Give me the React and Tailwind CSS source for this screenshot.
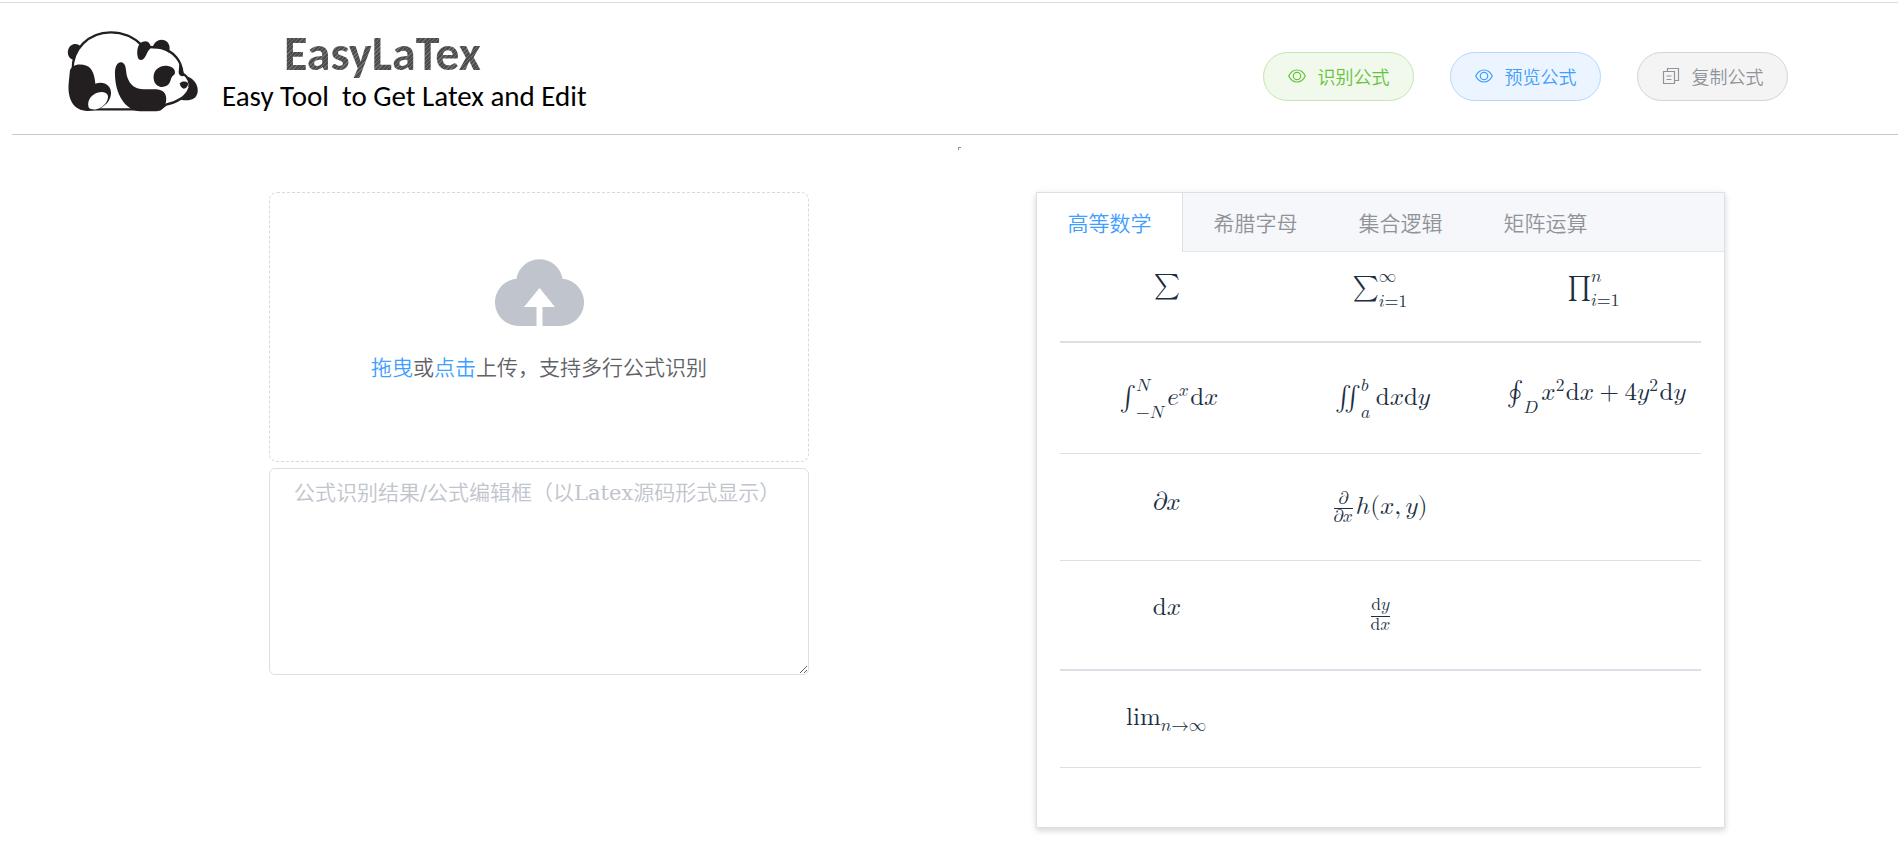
const TABS = ['高等数学', '希腊字母', '集合逻辑', '矩阵运算'];

const D = () => <mi mathvariant="normal">d</mi>;
const SumLimits = () => (
  <mrow>
    <mi>i</mi>
    <mo lspace="0" rspace="0">=</mo>
    <mn>1</mn>
  </mrow>
);

const ROWS = [
  {
    cell: 'h-[91px] border-b-2 pt-[22px]',
    items: [
      <mo>∑</mo>,
      <msubsup>
        <mo>∑</mo>
        <SumLimits />
        <mi>∞</mi>
      </msubsup>,
      <msubsup>
        <mo>∏</mo>
        <SumLimits />
        <mi>n</mi>
      </msubsup>,
    ],
  },
  {
    cell: 'h-[111px] border-b pt-9',
    items: [
      <>
        <msubsup>
          <mo rspace="2px">∫</mo>
          <mrow>
            <mo>−</mo>
            <mi>N</mi>
          </mrow>
          <mi>N</mi>
        </msubsup>
        <msup>
          <mi>e</mi>
          <mi>x</mi>
        </msup>
        <D />
        <mi>x</mi>
      </>,
      <>
        <msubsup>
          <mo>∬</mo>
          <mi>a</mi>
          <mi>b</mi>
        </msubsup>
        <D />
        <mi>x</mi>
        <D />
        <mi>y</mi>
      </>,
      <>
        <msub>
          <mo rspace="2px">∮</mo>
          <mi>D</mi>
        </msub>
        <msup>
          <mi>x</mi>
          <mn>2</mn>
        </msup>
        <D />
        <mi>x</mi>
        <mo>+</mo>
        <mn>4</mn>
        <msup>
          <mi>y</mi>
          <mn>2</mn>
        </msup>
        <D />
        <mi>y</mi>
      </>,
    ],
  },
  {
    cell: 'h-[107px] border-b pt-[37px]',
    items: [
      <>
        <mi>∂</mi>
        <mi>x</mi>
      </>,
      <>
        <mfrac>
          <mi>∂</mi>
          <mrow>
            <mi>∂</mi>
            <mi>x</mi>
          </mrow>
        </mfrac>
        <mspace width="3px" />
        <mi>h</mi>
        <mo stretchy="false">(</mo>
        <mi>x</mi>
        <mo>,</mo>
        <mi>y</mi>
        <mo stretchy="false">)</mo>
      </>,
      null,
    ],
  },
  {
    cell: 'h-[110px] border-b-2 pt-[37px]',
    items: [
      <>
        <D />
        <mi>x</mi>
      </>,
      <mfrac>
        <mrow>
          <D />
          <mi>y</mi>
        </mrow>
        <mrow>
          <D />
          <mi>x</mi>
        </mrow>
      </mfrac>,
      null,
    ],
  },
  {
    cell: 'h-[97px] border-b pt-[37px]',
    items: [
      <msub>
        <mi>lim</mi>
        <mrow>
          <mi>n</mi>
          <mo lspace="0" rspace="0">→</mo>
          <mi>∞</mi>
        </mrow>
      </msub>,
      null,
      null,
    ],
  },
];

function Panda() {
  return (
    <svg viewBox="0 0 435 300" className="h-[100px] w-[145px] shrink-0" aria-label="EasyLaTex" role="img">
      <g fill="#231f20">
        <path d="M40 120C18 114 20 84 34 76C44 68 56 72 64 80L46 116Z" />
        <path
          d="M38 150C36 90 84 37 152 37C196 37 224 54 246 76C262 84 282 80 304 84C342 94 366 124 367 160C385 170 392 188 388 204C380 230 350 248 318 254L300 268H86C40 262 30 200 38 150Z"
          fill="#fff"
          stroke="#231f20"
          strokeWidth="7"
        />
        <path d="M234 114C228 92 234 64 256 64C266 64 274 74 271 86C260 92 258 118 244 120C238 120 236 118 234 114Z" />
        <path d="M278 84C284 50 328 52 329 84L327 98C312 86 298 82 278 84Z" />
        <path d="M30 150C40 132 60 130 80 137C100 146 104 170 106 191C132 182 154 196 153 220C152 252 120 273 82 273C42 272 22 240 26 190Z" />
        <path d="M87 264C78 242 98 217 124 216C146 216 149 232 138 248C126 266 100 274 87 264Z" fill="#fff" />
        <path d="M165 164C163 136 176 122 188 128C200 134 196 152 202 172C210 196 226 208 252 208H290C312 210 322 224 318 246C314 264 302 274 284 274H240C194 270 166 220 165 164Z" />
        <path d="M281 176C278 152 298 134 324 138C342 141 349 154 343 164C335 168 334 174 330 186C320 208 284 206 281 176Z" />
        <path d="M358 132C366 140 371 152 372 168C364 170 355 166 356 156Z" />
        <path d="M378 168C400 174 416 194 413 216C408 242 386 243 362 239C386 222 398 196 378 168Z" />
        <path d="M360 190C364 183 381 183 384 190C385 199 378 206 371 206C364 204 359 197 360 190Z" />
      </g>
    </svg>
  );
}

function EyeIcon() {
  return (
    <svg viewBox="0 0 18 18" className="size-[18px]" fill="none" stroke="currentColor" aria-hidden="true">
      <path d="M.7 9C2.700 5 5.500 3 9 3s6.300 2 8.300 6c-2 4-4.800 6-8.300 6S2.700 13 .7 9z" strokeWidth="1.200" />
      <circle cx="9" cy="9" r="3.700" strokeWidth="1.200" />
    </svg>
  );
}

function CopyIcon() {
  return (
    <svg viewBox="0 0 18 18" className="size-[18px]" fill="none" stroke="currentColor" strokeWidth="1.200" aria-hidden="true">
      <path d="M1.500 4.500h11v12h-11zM5.500 4.500v-3h11v12h-4M4.500 9h5M4.500 12.500h5" />
    </svg>
  );
}

const ACTIONS = [
  { label: '识别公式', Icon: EyeIcon, tone: 'border-[#c2e7b0] bg-[#f0f9eb] text-[#67c23a]' },
  { label: '预览公式', Icon: EyeIcon, tone: 'border-[#b3d8ff] bg-[#ecf5ff] text-[#409eff]' },
  { label: '复制公式', Icon: CopyIcon, tone: 'border-[#d3d4d6] bg-[#f4f4f5] text-[#909399]' },
];

export default function App() {
  return (
    <div className="mt-[2px] border-t border-[#dcdcdc] bg-white pb-8 font-['Noto_Sans_CJK_SC',sans-serif] font-[350]">
      <header className="ml-3 flex h-[132px] items-start justify-between border-b border-[#ccc6c8] pr-[110px] pl-12">
        <div className="flex pt-[17px]">
          <Panda />
          <div className="ml-[17px] font-[Carlito,Lato,sans-serif]">
            <h1 className="ml-[62px] bg-[repeating-linear-gradient(135deg,#4c4c4c_0px,#4c4c4c_2px,#707070_2px,#707070_3px)] bg-clip-text pt-[7px] text-[48px] leading-[54px] font-bold text-transparent">
              EasyLaTex
            </h1>
            <p className="text-[29px] leading-[30px] font-normal whitespace-pre text-black">Easy Tool  to Get Latex and Edit</p>
          </div>
        </div>
        <div className="flex gap-9 pt-[49px]">
          {ACTIONS.map(({ label, Icon, tone }) => (
            <button
              key={label}
              type="button"
              className={`flex h-[49px] w-[151px] items-center justify-center gap-3 rounded-full border pb-[2px] text-[18px] leading-none ${tone}`}
            >
              <Icon />
              {label}
            </button>
          ))}
        </div>
      </header>

      <div className="ml-3 flex h-[57px] justify-center pt-3 pl-2" aria-hidden="true">
        <span className="size-[3px] border-t border-l border-[#909090]" />
      </div>

      <main className="grid grid-cols-[269fr_540fr_227fr_689fr_173fr] items-start">
        <section className="col-start-2 flex flex-col gap-[6px]">
          <label className="flex h-[270px] cursor-pointer flex-col items-center rounded-lg border border-dashed border-[#d9d9d9] pt-[66px] text-[21px] leading-8 text-[#606266]">
            <svg viewBox="0 0 89 67" className="mb-6 h-[67px] w-[89px]" fill="#c0c4cc" aria-hidden="true">
              <path d="M21.500 19.700A23.300 23.300 0 0 1 67.500 19.700A23.700 23.700 0 0 1 65.300 67H47.500V48H60L44.500 29L29 48H41.500V67H23.700A23.700 23.700 0 0 1 21.500 19.700Z" />
            </svg>
            <span>
              <span className="text-[#409eff]">拖曳</span>或<span className="text-[#409eff]">点击</span>上传，支持多行公式识别
            </span>
            <input type="file" className="sr-only" />
          </label>
          <textarea
            aria-label="公式编辑框"
            placeholder="公式识别结果/公式编辑框（以Latex源码形式显示）"
            className="block h-[207px] w-full resize rounded-md border border-[#dcdfe6] px-6 py-2 font-['DejaVu_Serif','Noto_Sans_CJK_SC',serif] text-[21px] leading-8 font-[350] placeholder:text-[#c0c4cc]"
          />
        </section>

        <section className="col-start-4 h-[636px] border border-[#dcdfe6] bg-white shadow-[0_3px_6px_0_rgba(0,0,0,0.14),0_0_9px_0_rgba(0,0,0,0.04)]">
          <div role="tablist" className="flex h-[59px] border-b border-[#e4e7ed] bg-[#f5f7fa] text-[21px]">
            {TABS.map((tab, i) => (
              <button
                key={tab}
                type="button"
                role="tab"
                aria-selected={i === 0}
                className={
                  i === 0
                    ? '-mb-px w-[146px] border-r border-[#dcdfe6] bg-white text-[#409eff]'
                    : '-mb-px w-[145px] text-[#909399]'
                }
              >
                {tab}
              </button>
            ))}
          </div>
          <div className="px-[23px]">
            <table className="w-full table-fixed border-separate border-spacing-0 font-normal text-[#1c2f42]">
              <tbody>
                {ROWS.map((row, r) => (
                  <tr key={r}>
                    {row.items.map((item, c) => (
                      <td key={c} className={`border-[#dcdfe6] p-0 align-top ${row.cell}`}>
                        {item && (
                          <div className="flex justify-center">
                            <math className="font-['Latin_Modern_Math','Liberation_Serif',serif] text-[25px] leading-none">{item}</math>
                          </div>
                        )}
                      </td>
                    ))}
                  </tr>
                ))}
              </tbody>
            </table>
          </div>
        </section>
      </main>
    </div>
  );
}
